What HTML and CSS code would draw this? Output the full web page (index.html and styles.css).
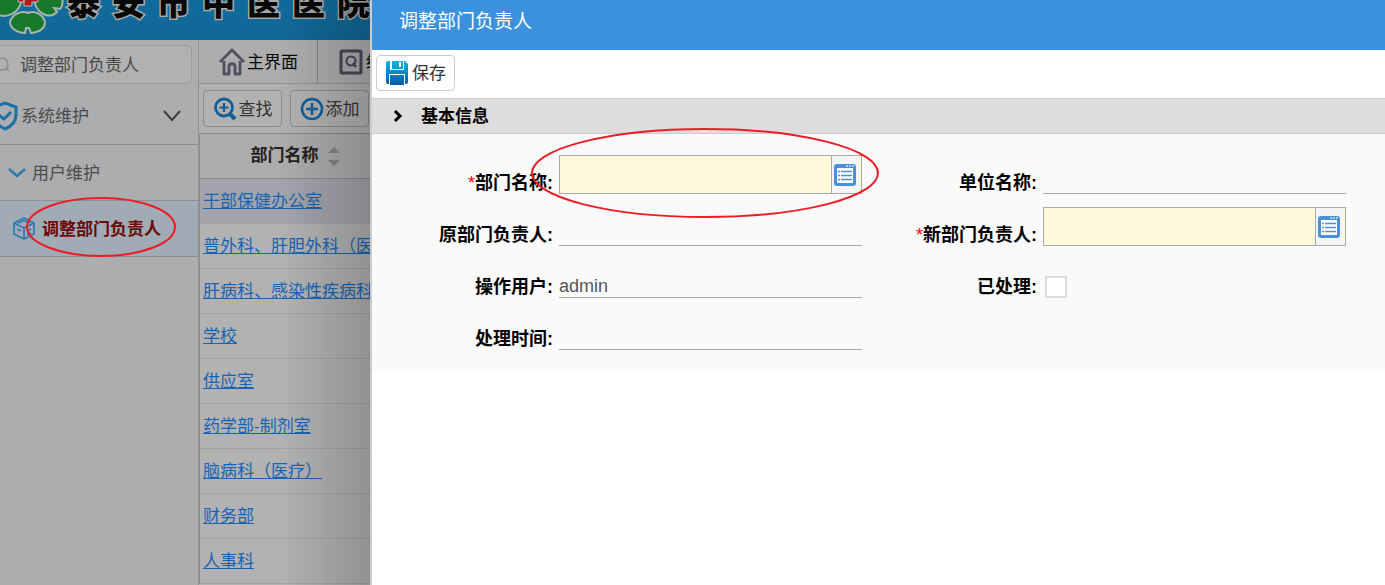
FILE: index.html
```html
<!DOCTYPE html>
<html lang="zh-CN">
<head>
<meta charset="utf-8">
<title>调整部门负责人</title>
<link rel="stylesheet" href="styles.css">
</head>
<body>
<div class="app">
  <header class="banner">
    <svg class="logo" width="64" height="36" viewBox="0 0 64 36" aria-hidden="true">
      <g fill="#18792c" stroke="#a9b5ab" stroke-width="2">
        <path d="M-2 -2V15C8 18 18 13 21 3V-2Z"/>
        <path d="M35 -2V4C39 15 50 19 57 12L54 8L60 9C63 6 63 2 62 -2Z"/>
        <path d="M28 13C22 10 12 14 10 22C10 28 17 33 25 33L26 28H29L31 33C39 32 45 29 45 22C43 14 34 10 28 13Z"/>
      </g>
      <path d="M24 -1V2H18V-2H38V2H32V6H24Z" fill="#b41a1e" stroke="#bbb"/>
    </svg>
    <div class="hospital"><span>泰</span><span>安</span><span>市</span><span>中</span><span>医</span><span>医</span><span>院</span></div>
  </header>
  <div class="workspace">
    <nav class="sidebar">
      <label class="search">
        <svg width="10" height="18" viewBox="0 0 10 18" fill="none" stroke="#85878c" stroke-width="1.2"><circle cx="2" cy="8" r="6"/><path d="M6 12L9 15"/></svg>
        <input type="text" value="调整部门负责人" aria-label="搜索菜单">
      </label>
      <button class="menu menu-top">
        <svg width="18" height="30" viewBox="0 0 18 30" fill="none" stroke="#1870a8" stroke-width="3"><path d="M-6 6L5 2L16 6V14C16 21 12 25 5 28C1 26 -4 23 -6 18"/><path d="M-1 14L4 18L11 11"/></svg>
        <span>系统维护</span>
        <svg class="chevron" width="18" height="12" viewBox="0 0 18 12" fill="none" stroke="#3c3c3c" stroke-width="2"><path d="M1 1L9 10L17 1"/></svg>
      </button>
      <button class="menu menu-sub">
        <svg width="18" height="10" viewBox="0 0 18 10" fill="none" stroke="#2a7cad" stroke-width="2.5"><path d="M1 1L9 8L17 1"/></svg>
        <span>用户维护</span>
      </button>
      <button class="menu menu-leaf">
        <svg width="24" height="24" viewBox="0 0 24 24" fill="none" stroke="#2a7cad" stroke-width="1.7" stroke-linejoin="round"><path d="M12 1L22 6V17L12 22L2 17V6Z"/><path d="M2 6L12 11L22 6M12 11V22M6 6L12 3.500L18 6M5 12L9 14M15 14L19 12M15 18L19 16"/></svg>
        <span>调整部门负责人</span>
        <svg class="mark mark-menu" width="152" height="62" viewBox="0 0 152 62" aria-hidden="true"><ellipse cx="76" cy="31" rx="74" ry="29"/></svg>
      </button>
    </nav>
    <main class="main">
      <div class="tabs">
        <button class="tab">
          <svg width="26" height="28" viewBox="0 0 26 28" fill="none" stroke="#50515f" stroke-width="2.800" stroke-linejoin="round"><path d="M1 14L13 2L25 14M5 13V26H10V18C10 15 16 15 16 18V26H21V13"/></svg>
          <span>主界面</span>
        </button>
        <button class="tab">
          <svg width="26" height="26" viewBox="0 0 26 26" fill="none" stroke="#474856" stroke-width="3"><rect x="3" y="2" width="20" height="22" rx="1"/><circle cx="13" cy="12" r="4.500" stroke-width="2.200"/><path d="M15 14L18 18" stroke-width="2.400"/></svg>
          <span>统计</span>
        </button>
      </div>
      <div class="tools">
        <button class="tool">
          <svg width="24" height="24" viewBox="0 0 24 24" fill="none" stroke="#125f98" stroke-width="2.800"><circle cx="11" cy="10.500" r="8.500"/><path d="M11 6V15M6.500 10.500H15.500" stroke-width="2.200"/><path d="M17 17L22 22" stroke-width="4"/></svg>
          <span>查找</span>
        </button>
        <button class="tool">
          <svg width="24" height="24" viewBox="0 0 24 24" fill="none" stroke="#125f98" stroke-width="2.600"><circle cx="12" cy="12" r="10"/><path d="M12 6V18M6 12H18"/></svg>
          <span>添加</span>
        </button>
      </div>
      <table class="list">
        <thead><tr><th><span class="th-inner">部门名称<svg width="12" height="20" viewBox="0 0 12 20" fill="#828487"><path d="M6 1L12 7H0ZM6 20L0 14H12Z"/></svg></span></th></tr></thead>
        <tbody>
          <tr class="current"><td><a href="#">干部保健办公室</a></td></tr>
          <tr><td><a href="#">普外科、肝胆外科（医</a>...</td></tr>
          <tr><td><a href="#">肝病科、感染性疾病科</a>...</td></tr>
          <tr><td><a href="#">学校</a></td></tr>
          <tr><td><a href="#">供应室</a></td></tr>
          <tr><td><a href="#">药学部-制剂室</a></td></tr>
          <tr><td><a href="#">脑病科（医疗）</a></td></tr>
          <tr><td><a href="#">财务部</a></td></tr>
          <tr><td><a href="#">人事科</a></td></tr>
        </tbody>
      </table>
    </main>
  </div>
</div>
<section class="dialog">
  <h1 class="title">调整部门负责人</h1>
  <div class="actions">
    <button class="save">
      <svg width="24" height="26" viewBox="0 0 24 26">
        <defs><linearGradient id="disk" x1="0" y1="0" x2="0" y2="1"><stop offset="0" stop-color="#13b0ee"/><stop offset="1" stop-color="#075ca9"/></linearGradient></defs>
        <path d="M3 1H20L23 4V22Q23 24 21 24H3Q1 24 1 22V3Q1 1 3 1Z" fill="url(#disk)"/>
        <path d="M5 1H19V10H5ZM4 14H20V24H4Z" fill="#fff"/>
        <path d="M7 1H18V9H7ZM5 15H19V25H5Z" fill="url(#disk)"/>
        <path d="M14 2H16V7H14Z" fill="#fff"/>
      </svg>
      <span>保存</span>
    </button>
  </div>
  <h2 class="section"><svg width="10" height="14" viewBox="0 0 10 14" fill="none" stroke="#000" stroke-width="3"><path d="M2 2L7 7L2 12"/></svg><span>基本信息</span></h2>
  <form class="form">
    <div class="field">
      <label for="dept"><i>*</i>部门名称:</label>
      <div class="lookup"><input id="dept" type="text"><button type="button" aria-label="选择部门"><svg width="24" height="24" viewBox="0 0 24 24"><rect x="1" y="1" width="22" height="22" rx="3" fill="#4a90d9"/><path d="M4 5H20V20H4Z" fill="#fff"/><path d="M13 2H15V4H13ZM16 2H18V4H16ZM19 2H21V4H19Z" fill="#a9cdf0"/><path d="M5 8.500H7M8 8.500H19M5 12.500H7M8 12.500H19M5 16.500H7M8 16.500H19" stroke="#4a90d9" stroke-width="1.500"/></svg></button></div>
      <svg class="mark mark-field" width="350" height="92" viewBox="0 0 350 92" aria-hidden="true"><ellipse cx="175" cy="46" rx="173" ry="44"/></svg>
    </div>
    <div class="field"><label for="unit">单位名称:</label><input class="line" id="unit" type="text"></div>
    <div class="field"><label for="old">原部门负责人:</label><input class="line" id="old" type="text"></div>
    <div class="field">
      <label for="new"><i>*</i>新部门负责人:</label>
      <div class="lookup"><input id="new" type="text"><button type="button" aria-label="选择负责人"><svg width="24" height="24" viewBox="0 0 24 24"><rect x="1" y="1" width="22" height="22" rx="3" fill="#4a90d9"/><path d="M4 5H20V20H4Z" fill="#fff"/><path d="M13 2H15V4H13ZM16 2H18V4H16ZM19 2H21V4H19Z" fill="#a9cdf0"/><path d="M5 8.500H7M8 8.500H19M5 12.500H7M8 12.500H19M5 16.500H7M8 16.500H19" stroke="#4a90d9" stroke-width="1.500"/></svg></button></div>
    </div>
    <div class="field"><label for="user">操作用户:</label><input class="line" id="user" type="text" value="admin"></div>
    <div class="field"><label for="done">已处理:</label><input class="check" id="done" type="checkbox"></div>
    <div class="field"><label for="time">处理时间:</label><input class="line" id="time" type="text"></div>
  </form>
</section>
</body>
</html>
```

FILE: styles.css
```css
* { box-sizing: border-box; }
body {
  margin: 0;
  height: 100vh;
  display: flex;
  overflow: hidden;
  background: #fff;
  font: 17px/24px "Liberation Sans", "Noto Sans CJK SC", sans-serif;
  color: #333;
}
button, input { font: inherit; color: inherit; margin: 0; }
button { background: none; border: 0; padding: 0; cursor: pointer; white-space: nowrap; }
button span, .section span { padding-top: 2px; }
svg { display: block; flex: none; }

.app {
  flex: 0 0 370px;
  position: relative;
  display: flex;
  flex-direction: column;
  overflow: hidden;
  background: #b1b1b1;
}
.app::after {
  content: "";
  position: absolute;
  inset: 0 0 0 auto;
  width: 90px;
  background: linear-gradient(90deg, transparent, rgba(0, 0, 0, .18));
  pointer-events: none;
}
.banner {
  flex: 0 0 40px;
  display: flex;
  align-items: flex-start;
  gap: 3px;
  overflow: hidden;
  background: linear-gradient(#106b9c, #116896);
}
.hospital {
  display: flex;
  gap: 12px;
  font-size: 33px;
  line-height: 8px;
  font-weight: 900;
  color: #080808;
  -webkit-text-stroke: 3px #aaa9a6;
  paint-order: stroke fill;
}
.workspace { flex: 1; display: flex; min-height: 0; }

.sidebar {
  flex: 0 0 199px;
  display: flex;
  flex-direction: column;
  background: #acadaf;
  border-right: 1px solid #939393;
}
.search {
  display: flex;
  align-items: center;
  gap: 10px;
  height: 39px;
  margin: 5px 6px 4px 0;
  border: 1px solid #999ba0;
  border-left: 0;
  border-radius: 0 5px 5px 0;
  background: #b1b1b1;
}
.search input { width: 100%; min-width: 0; border: 0; padding: 2px 0 0; background: none; outline: 0; color: #484848; }
.menu {
  position: relative;
  display: flex;
  align-items: center;
  height: 56px;
  border-bottom: 1px solid #8f8f8f;
  color: #4b4b4b;
}
.menu-top { height: 57px; gap: 3px; padding-right: 17px; }
.chevron { margin-left: auto; }
.menu-sub { gap: 6px; padding-left: 8px; }
.menu-leaf { gap: 6px; padding-left: 12px; background: #a1abb5; color: #6c0808; font-weight: 700; }
.mark { position: absolute; fill: none; stroke: #ed1c24; stroke-width: 2; pointer-events: none; }
.mark-menu { left: 25px; top: -5px; }
.mark-field { left: 152px; top: -28px; }

.main { flex: 1; min-width: 0; background: #b2b2b2; overflow: hidden; }
.tabs { display: flex; height: 44px; border-bottom: 1px solid #909090; background: #adadad; }
.tab {
  flex: none;
  display: flex;
  align-items: center;
  gap: 2px;
  padding: 0 19px 0 20px;
  border-right: 1px solid #888;
  color: #080808;
}
.tools { display: flex; gap: 8px; height: 49px; padding: 6px 4px; background: #b0b0b0; }
.tool {
  flex: 0 0 79px;
  display: flex;
  align-items: center;
  justify-content: center;
  gap: 2px;
  height: 37px;
  border: 1px solid #8c8c8c;
  border-radius: 4px;
  background: #b2b2b2;
}
.list { width: 100%; table-layout: fixed; border-collapse: separate; border-spacing: 0; border-left: 1px solid #8b8b8b; }
.list th { height: 46px; padding: 0; border-top: 1px solid #8b8b8b; border-bottom: 1px solid #8b8b8b; background: #acacac; color: #222; }
.th-inner { display: flex; align-items: center; justify-content: center; gap: 9px; padding-left: 20px; }
.list td { height: 45px; padding: 2px 0 0 3px; border-bottom: 1px solid #a3a3a5; white-space: nowrap; overflow: hidden; }
.list a { color: #1764b5; text-decoration-thickness: 1px; text-underline-offset: 1px; }
.current { background: #a3a4ab; }

.dialog { flex: 1; min-width: 0; border-left: 2px solid #ccc; background: #fff; }
.title {
  height: 50px;
  margin: 0;
  padding: 0 27px;
  background: #3c91dc;
  color: #fff;
  font-size: 19px;
  font-weight: 400;
  line-height: 44px;
}
.actions { height: 48px; padding: 5px 4px; }
.save {
  display: flex;
  align-items: center;
  justify-content: center;
  gap: 3px;
  width: 79px;
  height: 36px;
  border: 1px solid #ccc;
  border-radius: 4px;
}
.section {
  display: flex;
  align-items: center;
  gap: 18px;
  height: 36px;
  margin: 0;
  padding-left: 21px;
  border: solid #ccc;
  border-width: 1px 0;
  background: #ddd;
  color: #000;
  font-size: 17px;
}
.form {
  display: grid;
  grid-template-columns: 1fr 1fr;
  row-gap: 13px;
  padding: 21px 39px 21px 6px;
  background: #fafafa;
  font-size: 18px;
}
.field { position: relative; display: flex; align-items: flex-end; gap: 6px; height: 39px; }
.field label { flex: 0 0 175px; text-align: right; font-weight: 700; line-height: 22px; color: #000; }
.field i { color: #f00; font-style: normal; font-weight: 400; }
.line {
  flex: 1;
  min-width: 0;
  height: 24px;
  padding: 0;
  border: 0;
  border-bottom: 1px solid #aaa;
  background: none;
  outline: 0;
  color: #555;
}
.lookup { flex: 1; min-width: 0; display: flex; height: 39px; padding-right: 2px; border: 1px solid #aaa; background: #fff9dc; }
.lookup input { flex: 1; min-width: 0; border: 0; padding: 0 4px; background: none; outline: 0; }
.lookup button { display: flex; align-items: center; width: 28px; border-left: 1px solid #aaa; background: #f5f5f5; padding-left: 1px; }
.check { appearance: none; width: 22px; height: 22px; margin-left: 2px; border: 2px solid #ddd; background: #fff; }
```
